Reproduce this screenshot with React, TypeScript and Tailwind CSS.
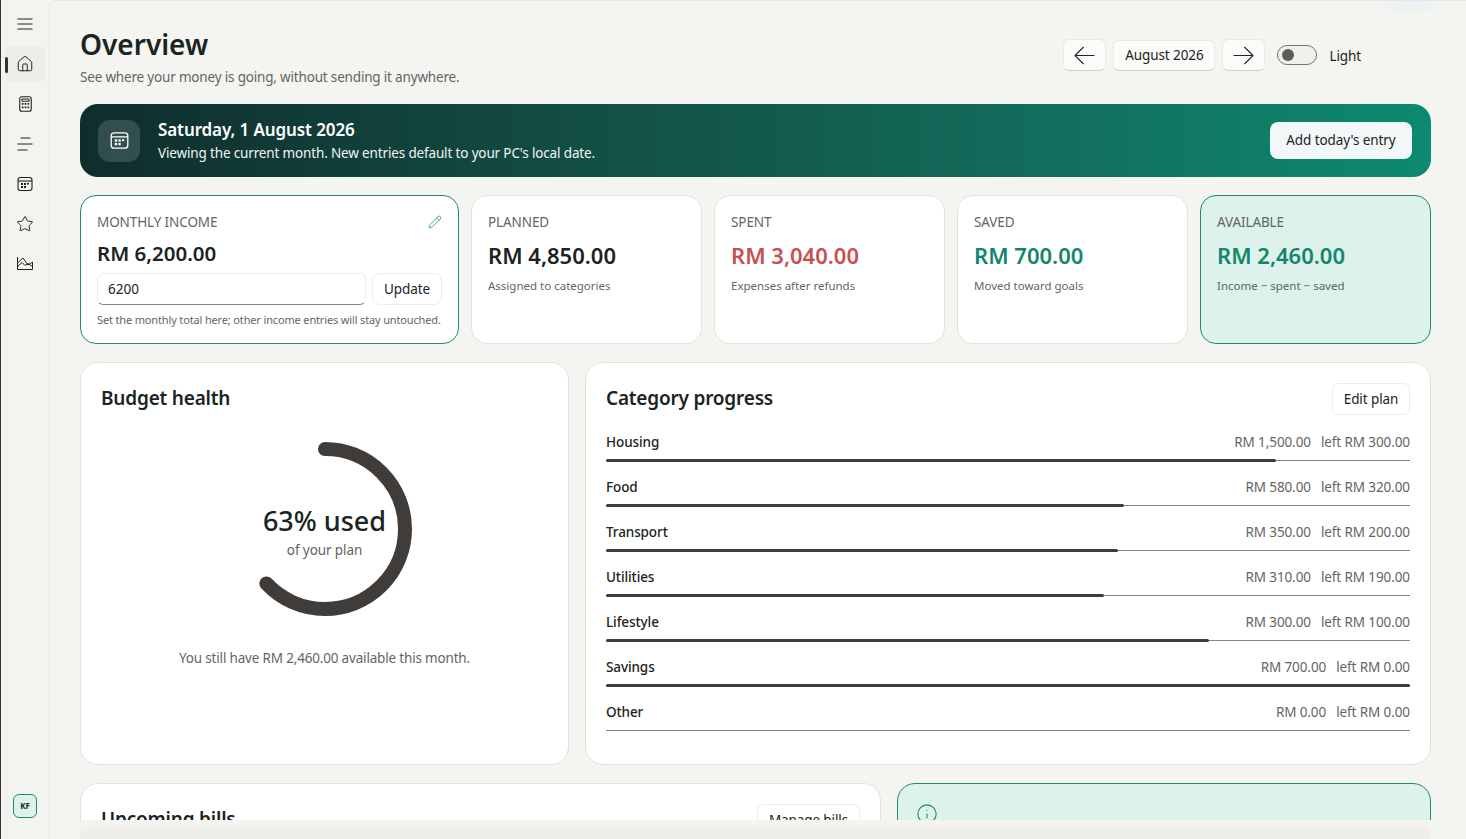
import { Home, Info, Pencil, Star } from "lucide-react";

const categories = [
  { name: "Housing", spent: 1500, left: 300 },
  { name: "Food", spent: 580, left: 320 },
  { name: "Transport", spent: 350, left: 200 },
  { name: "Utilities", spent: 310, left: 190 },
  { name: "Lifestyle", spent: 300, left: 100 },
  { name: "Savings", spent: 700, left: 0 },
  { name: "Other", spent: 0, left: 0 },
];

const money = (n: number) =>
  "RM " + n.toLocaleString("en-US", { minimumFractionDigits: 2, maximumFractionDigits: 2 });

function MenuIcon() {
  return (
    <svg width="16" height="12" viewBox="0 0 16 12" fill="none" stroke="#222" strokeWidth="1">
      <path d="M0.5 1h15M0.5 6h15M0.5 11h15" />
    </svg>
  );
}

function CalcIcon() {
  return (
    <svg width="13" height="16" viewBox="0 0 13 16" fill="none" stroke="#222" strokeWidth="1.1">
      <rect x="0.75" y="0.75" width="11.5" height="14.5" rx="2" />
      <rect x="3" y="3" width="7" height="2.2" rx="0.5" />
      <g fill="#222" stroke="none">
        <rect x="2.8" y="7" width="1.7" height="1.7" />
        <rect x="5.65" y="7" width="1.7" height="1.7" />
        <rect x="8.5" y="7" width="1.7" height="1.7" />
        <rect x="2.8" y="10.5" width="1.7" height="1.7" />
        <rect x="5.65" y="10.5" width="1.7" height="1.7" />
        <rect x="8.5" y="10.5" width="1.7" height="1.7" />
      </g>
    </svg>
  );
}

function LinesIcon() {
  return (
    <svg width="16" height="14" viewBox="0 0 16 14" fill="none" stroke="#222" strokeWidth="1">
      <path d="M3.5 1h10M0.5 7h15M0.5 13h10" />
    </svg>
  );
}

function CalendarIcon({ color = "#222", size = 16 }: { color?: string; size?: number }) {
  return (
    <svg width={size} height={size} viewBox="0 0 16 16" fill="none" stroke={color} strokeWidth="1.1">
      <rect x="1" y="1.5" width="14" height="13" rx="2.5" />
      <path d="M1 5h14" />
      <g fill={color} stroke="none">
        <rect x="4" y="7" width="2" height="2" />
        <rect x="7" y="7" width="2" height="2" />
        <rect x="10" y="7" width="2" height="1.5" />
        <rect x="4" y="10" width="2" height="2" />
        <rect x="7" y="10" width="2" height="2" />
      </g>
    </svg>
  );
}

function ChartIcon() {
  return (
    <svg width="16" height="14" viewBox="0 0 16 14" fill="none" stroke="#222" strokeWidth="1">
      <path d="M0.5 1v12.5h15V6L11 9 6 2 0.5 7" />
      <path d="M0.5 10.5 5 6.5l3 3 3-2 4.5 3" />
    </svg>
  );
}

function LongArrow({ flip = false }: { flip?: boolean }) {
  return (
    <svg width="21" height="19" viewBox="0 0 21 19" fill="none" stroke="#222" strokeWidth="1.1" className={flip ? "-scale-x-100" : ""}>
      <path d="M20.5 9.5H1M9.5 1 1 9.5 9.5 18" />
    </svg>
  );
}

function Stat({ label, value, note, color }: { label: string; value: string; note: string; color: string }) {
  return (
    <div className="rounded-2xl border border-[#e2e2de] bg-white px-4 pt-[16px]">
      <div className="text-[13.5px] leading-5 tracking-[-0.1px] text-[#5f6664]">{label}</div>
      <div className={`mt-[7px] text-[22px] font-semibold leading-8 ${color}`}>{value}</div>
      <div className="mt-[7px] text-[11.5px] leading-4 text-[#5f6664]">{note}</div>
    </div>
  );
}

export default function App() {
  return (
    <div className="flex h-screen w-full overflow-hidden border-l border-l-[#333] bg-[#f3f3ef] font-['Noto_Sans','Open_Sans',sans-serif] text-[#1a2422]">
      <nav className="flex w-[48px] shrink-0 flex-col items-center pb-[21px] pt-[18px]">
        <MenuIcon />
        <div className="relative mt-[16px] flex h-9 w-10 items-center justify-center rounded-md bg-[#ecece8]">
          <span className="absolute left-0 top-[11px] h-[16px] w-[3px] rounded bg-[#333]" />
          <Home size={18} strokeWidth={1.3} color="#222" />
        </div>
        <div className="mt-[14px] flex"><CalcIcon /></div>
        <div className="mt-[25px] flex"><LinesIcon /></div>
        <div className="mt-[25px] flex"><CalendarIcon /></div>
        <div className="mt-[23px]"><Star size={18} strokeWidth={1.3} color="#222" /></div>
        <div className="mt-[23px]"><ChartIcon /></div>
        <div className="mt-auto flex h-6 w-6 items-center justify-center rounded-md border border-[#1f8a73] bg-[#dcf2ea] text-[8px] font-bold">
          KF
        </div>
      </nav>

      <main className="relative min-w-0 flex-1 overflow-hidden rounded-tl-lg border-l border-t border-[#e6e6e2] bg-[#f4f4f1]">
        <div className="absolute right-[16px] top-0 h-[10px] w-[80px] rounded-b-full bg-gradient-to-l from-transparent via-[#e9f2f6] to-transparent" />
        <div className="pl-[30px] pr-[35px] pt-[25px]">
          <header className="flex items-start justify-between">
            <div>
              <h1 className="text-[28px] font-semibold leading-9">Overview</h1>
              <p className="mt-[5px] text-[13.5px] leading-5 tracking-[-0.18px] text-[#5f6664]">
                See where your money is going, without sending it anywhere.
              </p>
            </div>
            <div className="mr-[70px] mt-[13px] flex items-center">
              <button className="flex h-8 w-[43px] items-center justify-center rounded-md border border-[#e8e8e4] border-b-[#cfcfcb] bg-[#fbfbfa]">
                <LongArrow />
              </button>
              <button className="ml-[7px] h-[31px] w-[102px] rounded-md border border-[#e8e8e4] border-b-[#cfcfcb] bg-[#fbfbfa] text-[13.5px] tracking-[-0.1px]">
                August 2026
              </button>
              <button className="ml-[7px] flex h-8 w-[43px] items-center justify-center rounded-md border border-[#e8e8e4] border-b-[#cfcfcb] bg-[#fbfbfa]">
                <LongArrow flip />
              </button>
              <div className="ml-[12px] flex h-5 w-10 items-center rounded-full border border-[#77776f] bg-[#efefec] pl-[4px]">
                <span className="h-3 w-3 rounded-full bg-[#5c5c58]" />
              </div>
              <span className="ml-3 mt-[2px] text-[13.5px] tracking-[-0.1px]">Light</span>
            </div>
          </header>

          <section className="mt-[17px] flex h-[73px] items-center rounded-[18px] bg-gradient-to-r from-[#0f2d2d] to-[#0c8a70] pl-[18px] pr-[19px] text-white">
            <div className="flex h-[42px] w-[42px] items-center justify-center rounded-xl bg-white/15">
              <CalendarIcon color="#fff" size={19} />
            </div>
            <div className="ml-[18px]">
              <div className="text-[17px] font-semibold leading-6 tracking-[-0.1px]">Saturday, 1 August 2026</div>
              <div className="mt-px text-[13.5px] leading-5 tracking-[-0.15px] text-[#eef6f4]">
                Viewing the current month. New entries default to your PC's local date.
              </div>
            </div>
            <button className="ml-auto h-[37px] w-[142px] rounded-lg bg-[#f2f8f8] text-[13.5px] tracking-[-0.1px] text-[#1a2422]">
              Add today's entry
            </button>
          </section>

          <section className="mt-[18px] grid h-[149px] grid-cols-[379px_1fr_1fr_1fr_1fr] gap-3">
            <div className="rounded-2xl border border-[#1f8a73] bg-white px-4 pt-[16px]">
              <div className="flex items-center justify-between">
                <span className="text-[13.5px] leading-5 tracking-[-0.1px] text-[#5f6664]">MONTHLY INCOME</span>
                <Pencil size={14} strokeWidth={1.4} color="#1f9a7f" />
              </div>
              <div className="mt-[5px] text-[20.5px] font-semibold leading-8">RM 6,200.00</div>
              <div className="mt-[4px] flex gap-[6px]">
                <input
                  readOnly
                  value="6200"
                  className="h-8 w-[269px] rounded-md border border-[#ececea] border-b-[#8a8a86] bg-white px-[10px] text-[13.5px] outline-none"
                />
                <button className="h-8 flex-1 rounded-lg border border-[#ececea] text-[13.5px] tracking-[-0.1px]">Update</button>
              </div>
              <p className="mt-[7px] whitespace-nowrap text-[11px] leading-4 tracking-[-0.15px] text-[#5f6664]">
                Set the monthly total here; other income entries will stay untouched.
              </p>
            </div>
            <Stat label="PLANNED" value="RM 4,850.00" note="Assigned to categories" color="text-[#1a2422]" />
            <Stat label="SPENT" value="RM 3,040.00" note="Expenses after refunds" color="text-[#c9504f]" />
            <Stat label="SAVED" value="RM 700.00" note="Moved toward goals" color="text-[#12866c]" />
            <div className="rounded-2xl border border-[#1f8a73] bg-[#dcf2ea] px-4 pt-[16px]">
              <div className="text-[13.5px] leading-5 tracking-[-0.1px] text-[#5f6664]">AVAILABLE</div>
              <div className="mt-[7px] text-[22px] font-semibold leading-8 text-[#12866c]">RM 2,460.00</div>
              <div className="mt-[7px] text-[11.5px] leading-4 text-[#5f6664]">Income − spent − saved</div>
            </div>
          </section>

          <section className="mt-[18px] grid h-[403px] grid-cols-[489px_1fr] gap-4">
            <div className="flex flex-col items-center rounded-[18px] border border-[#e2e2de] bg-white px-5 pt-[20px]">
              <h2 className="mt-px self-start text-[19px] font-semibold leading-7 tracking-[-0.2px]">Budget health</h2>
              <div className="relative mt-[30px] h-[174px] w-[174px]">
                <svg width="174" height="174" viewBox="0 0 174 174" className="-rotate-90">
                  <circle
                    cx="87"
                    cy="87"
                    r="80"
                    fill="none"
                    stroke="#3f3c3a"
                    strokeWidth="14"
                    strokeLinecap="round"
                    strokeDasharray={`${0.63 * 2 * Math.PI * 80} 1000`}
                  />
                </svg>
                <div className="absolute inset-0 flex flex-col items-center justify-center pt-[5px]">
                  <div className="text-[27px] font-medium leading-9">63% used</div>
                  <div className="mt-px text-[13.5px] leading-5 tracking-[-0.1px] text-[#5f6664]">of your plan</div>
                </div>
              </div>
              <p className="mt-[32px] text-[13.5px] leading-5 tracking-[-0.18px] text-[#5f6664]">
                You still have RM 2,460.00 available this month.
              </p>
            </div>

            <div className="rounded-[18px] border border-[#e2e2de] bg-white px-5 pt-[20px]">
              <div className="flex items-start justify-between">
                <h2 className="mt-px text-[19px] font-semibold leading-7 tracking-[-0.2px]">Category progress</h2>
                <button className="h-8 w-[78px] rounded-md border border-[#ececea] text-[13.5px] tracking-[-0.1px]">Edit plan</button>
              </div>
              <div className="mt-[17px] flex flex-col gap-[15px]">
                {categories.map((c) => {
                  const total = c.spent + c.left;
                  const pct = total ? (c.spent / total) * 100 : 0;
                  return (
                    <div key={c.name}>
                      <div className="flex h-5 items-center justify-between text-[13.5px] tracking-[-0.1px]">
                        <span className="font-medium">{c.name}</span>
                        <span className="text-[#5f6664]">
                          {money(c.spent)}
                          <span className="ml-[10px]">left {money(c.left)}</span>
                        </span>
                      </div>
                      <div className="relative mt-[6px] flex h-[4px] items-center">
                        <div className="h-px w-full bg-[#858585]" />
                        <div
                          className="absolute left-0 top-[0.5px] h-[3px] rounded-full bg-[#3f3c3a]"
                          style={{ width: `${pct}%` }}
                        />
                      </div>
                    </div>
                  );
                })}
              </div>
            </div>
          </section>

          <section className="mt-[18px] grid h-[200px] grid-cols-[801px_1fr] gap-4">
            <div className="rounded-t-[18px] border border-[#e2e2de] bg-white px-5 pt-[20px]">
              <div className="flex items-start justify-between">
                <h2 className="mt-px text-[19px] font-semibold leading-7 tracking-[-0.2px]">Upcoming bills</h2>
                <button className="h-8 w-[103px] rounded-md border border-[#ececea] text-[13.5px] tracking-[-0.1px]">Manage bills</button>
              </div>
            </div>
            <div className="rounded-t-[18px] border border-[#1f8a73] bg-[#dcf2ea] px-5 pt-[19px]">
              <Info size={22} strokeWidth={1.2} color="#1f8a73" className="-ml-[2px]" />
            </div>
          </section>
        </div>

        <div className="absolute inset-x-0 bottom-0 h-[19px] bg-[#f3f3ef] pl-[30px] pr-[35px] pt-[8px]">
          <div className="h-full rounded-t-md bg-[#eeeeeb]" />
        </div>
      </main>
    </div>
  );
}
